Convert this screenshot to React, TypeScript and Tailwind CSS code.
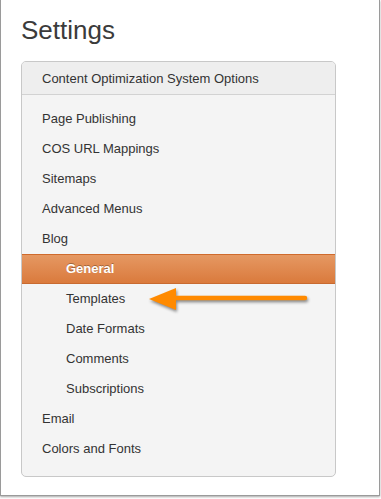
const items: { label: string; sub?: boolean; active?: boolean }[] = [
  { label: "Page Publishing" },
  { label: "COS URL Mappings" },
  { label: "Sitemaps" },
  { label: "Advanced Menus" },
  { label: "Blog" },
  { label: "General", sub: true, active: true },
  { label: "Templates", sub: true },
  { label: "Date Formats", sub: true },
  { label: "Comments", sub: true },
  { label: "Subscriptions", sub: true },
  { label: "Email" },
  { label: "Colors and Fonts" },
];

function Arrow() {
  return (
    <svg
      className="absolute left-[144px] top-[285px] drop-shadow-[1px_2px_1.5px_rgba(0,0,0,0.45)]"
      width="166"
      height="30"
      viewBox="0 0 166 30"
    >
      <path d="M30 13 L160 13" stroke="#ff8a00" strokeWidth="4.5" strokeLinecap="round" />
      <path d="M4 14 L31 3 L31 25 Z" fill="#ff8a00" />
    </svg>
  );
}

export default function App() {
  return (
    <div className="w-[381px] h-[499px] bg-white font-['Liberation_Sans',Arial,sans-serif]">
      <div className="relative w-[380px] h-[496px] bg-white border-x border-b border-[#9a9a9a] shadow-[0_1px_2px_rgba(0,0,0,0.35)]">
        <h1 className="pl-[20px] pt-[15px] text-[26px] leading-[30px] text-[#3b3b3b]">
          Settings
        </h1>
        <div className="ml-[20px] mt-[16px] w-[315px] rounded-[5px] border border-[#c8c8c8] bg-[#f4f4f4] overflow-hidden">
          <div className="h-[33px] flex items-center pl-[20px] pt-[1px] bg-[#eeeeee] border-b border-[#d2d2d2] text-[13px] text-[#333]">
            Content Optimization System Options
          </div>
          <div className="pt-[9px] pb-[12px]">
            {items.map((it) =>
              it.active ? (
                <div
                  key={it.label}
                  className="h-[30px] flex items-center pl-[44px] border-t border-t-[#cf6a2c] border-b border-b-[#c86a30] bg-gradient-to-b from-[#e59862] to-[#da7a3c] text-[13px] font-bold text-white [text-shadow:0_-1px_0_rgba(0,0,0,0.3)]"
                >
                  {it.label}
                </div>
              ) : (
                <div
                  key={it.label}
                  className={`h-[30px] flex items-center text-[13px] text-[#333] ${it.sub ? "pl-[44px]" : "pl-[20px]"}`}
                >
                  {it.label}
                </div>
              )
            )}
          </div>
        </div>
        <Arrow />
      </div>
    </div>
  );
}
